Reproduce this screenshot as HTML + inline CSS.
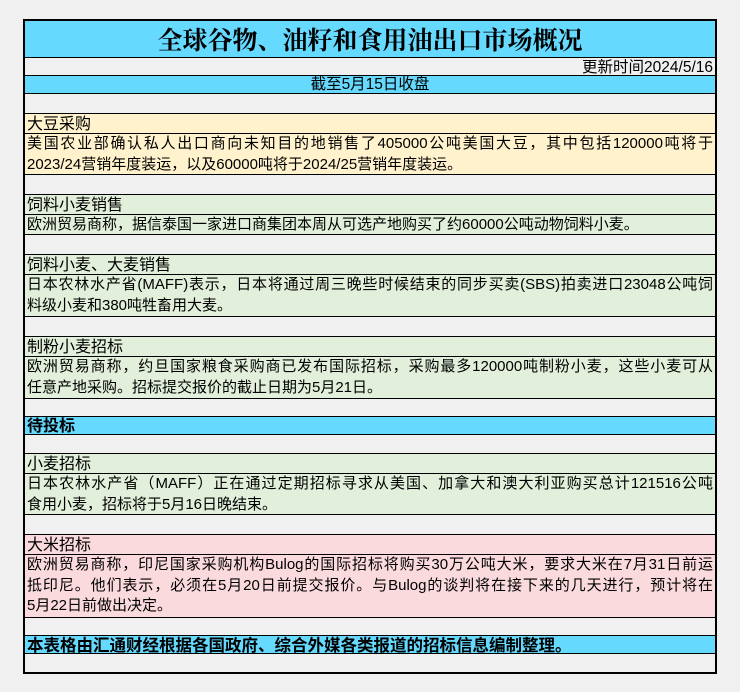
<!DOCTYPE html>
<html><head><meta charset="utf-8"><style>
body{margin:0;background:#f0f0f0;width:740px;height:692px;position:relative;overflow:hidden;font-family:"Liberation Sans","Noto Sans CJK SC",sans-serif;color:#000}
#t{position:absolute;left:23px;top:19px;width:690px;height:651px;border:2px solid #000}
.r{position:absolute;left:0;width:690px;border-bottom:1px solid #000;box-sizing:border-box;font-size:15px;line-height:20.5px;padding-left:2px;padding-right:2px;white-space:nowrap;overflow:hidden}
.j{display:block;text-align:justify;text-align-last:justify}
.b{background:#66d9ff}.y{background:#fff2cc}.g{background:#e2efda}.p{background:#fadadd}.w{background:#f0f0f0}
.h{font-size:16px;line-height:22px}
</style></head><body>
<div id="t">
<div class="r b" style="top:0;height:37px;text-align:center;font-size:25px;line-height:37px;font-family:'Noto Serif CJK SC',serif;font-weight:bold">全球谷物、油籽和食用油出口市场概况</div>
<div class="r w" style="top:37px;height:18px;text-align:right;line-height:20px;font-size:15.5px">更新时间2024/5/16</div>
<div class="r b" style="top:55px;height:18px;text-align:center;line-height:18px;font-size:15.5px">截至5月15日收盘</div>
<div class="r w" style="top:73px;height:20px"></div>
<div class="r y h" style="top:93px;height:20px">大豆采购</div>
<div class="r y" style="top:113px;height:41px"><span class="j">美国农业部确认私人出口商向未知目的地销售了405000公吨美国大豆，其中包括120000吨将于</span>2023/24营销年度装运，以及60000吨将于2024/25营销年度装运。</div>
<div class="r w" style="top:154px;height:20px"></div>
<div class="r g h" style="top:174px;height:20px">饲料小麦销售</div>
<div class="r g" style="top:194px;height:20px;line-height:20px">欧洲贸易商称，据信泰国一家进口商集团本周从可选产地购买了约60000公吨动物饲料小麦。</div>
<div class="r w" style="top:214px;height:20px"></div>
<div class="r g h" style="top:234px;height:20px">饲料小麦、大麦销售</div>
<div class="r g" style="top:254px;height:42px"><span class="j">日本农林水产省(MAFF)表示，日本将通过周三晚些时候结束的同步买卖(SBS)拍卖进口23048公吨饲</span>料级小麦和380吨牲畜用大麦。</div>
<div class="r w" style="top:296px;height:20px"></div>
<div class="r g h" style="top:316px;height:20px">制粉小麦招标</div>
<div class="r g" style="top:336px;height:42px"><span class="j">欧洲贸易商称，约旦国家粮食采购商已发布国际招标，采购最多120000吨制粉小麦，这些小麦可从</span>任意产地采购。招标提交报价的截止日期为5月21日。</div>
<div class="r w" style="top:378px;height:18px"></div>
<div class="r b" style="top:396px;height:18px;line-height:20px;font-weight:bold;font-size:16px">待投标</div>
<div class="r w" style="top:414px;height:19px"></div>
<div class="r g h" style="top:433px;height:20px">小麦招标</div>
<div class="r g" style="top:453px;height:41px"><span class="j">日本农林水产省（MAFF）正在通过定期招标寻求从美国、加拿大和澳大利亚购买总计121516公吨</span>食用小麦，招标将于5月16日晚结束。</div>
<div class="r w" style="top:494px;height:20px"></div>
<div class="r p h" style="top:514px;height:20px">大米招标</div>
<div class="r p" style="top:534px;height:63px"><span class="j">欧洲贸易商称，印尼国家采购机构Bulog的国际招标将购买30万公吨大米，要求大米在7月31日前运</span><span class="j">抵印尼。他们表示，必须在5月20日前提交报价。与Bulog的谈判将在接下来的几天进行，预计将在</span>5月22日前做出决定。</div>
<div class="r w" style="top:597px;height:18px"></div>
<div class="r b" style="top:615px;height:18px;line-height:20px;font-weight:bold;font-size:16.5px">本表格由汇通财经根据各国政府、综合外媒各类报道的招标信息编制整理。</div>
<div class="r w" style="top:633px;height:18px;border:none"></div>
</div>
</body></html>
